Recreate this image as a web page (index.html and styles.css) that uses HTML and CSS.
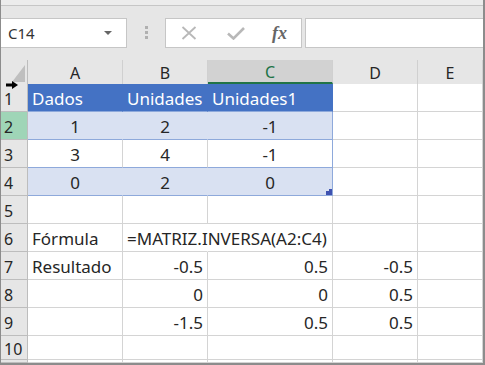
FILE: index.html
```html
<!DOCTYPE html>
<html lang="es">
<head>
  <meta charset="UTF-8" />
  <title>MATRIZ.INVERSA</title>
  <link rel="stylesheet" href="styles.css">
</head>
<body>
  <div class="window">
    <div class="topstrip"></div>
    <div class="toolbar">
      <div class="namebox">
        <span>C14</span>
        <svg class="caret" width="8" height="4" viewBox="0 0 8 4"><path d="M0 0H8L4 4Z" fill="#666"/></svg>
      </div>
      <div class="grip"><i></i><i></i><i></i></div>
      <div class="fxbox">
        <svg width="16" height="14" viewBox="0 0 16 14"><path d="M1.5 1L14.5 13M14.5 1L1.5 13" stroke="#b8b8b8" stroke-width="1.8"/></svg>
        <svg width="18" height="13" viewBox="0 0 18 13"><path d="M1 6.5L6.5 11.5L17 1" stroke="#b8b8b8" stroke-width="2.6" fill="none"/></svg>
        <span class="fx">fx</span>
      </div>
      <div class="formula"></div>
    </div>

    <div class="sheet">
      <div class="hd corner"><span class="tri"></span></div>
      <div class="hd col">A</div>
      <div class="hd col">B</div>
      <div class="hd col active">C</div>
      <div class="hd col">D</div>
      <div class="hd col">E</div>

      <div class="hd row">1</div>
      <div class="c thead">Dados</div>
      <div class="c thead">Unidades</div>
      <div class="c thead tend">Unidades1</div>
      <div class="c"></div>
      <div class="c"></div>

      <div class="hd row on">2</div>
      <div class="c band mid">1</div>
      <div class="c band mid">2</div>
      <div class="c band mid tend">-1</div>
      <div class="c"></div>
      <div class="c"></div>

      <div class="hd row">3</div>
      <div class="c plain mid">3</div>
      <div class="c plain mid">4</div>
      <div class="c plain mid tend">-1</div>
      <div class="c"></div>
      <div class="c"></div>

      <div class="hd row">4</div>
      <div class="c band mid">0</div>
      <div class="c band mid">2</div>
      <div class="c band mid tend">0<span class="handle"></span></div>
      <div class="c"></div>
      <div class="c"></div>

      <div class="hd row">5</div>
      <div class="c"></div>
      <div class="c"></div>
      <div class="c"></div>
      <div class="c"></div>
      <div class="c"></div>

      <div class="hd row">6</div>
      <div class="c">Fórmula</div>
      <div class="c spill">=MATRIZ.INVERSA(A2:C4)</div>
      <div class="c"></div>
      <div class="c"></div>
      <div class="c"></div>

      <div class="hd row">7</div>
      <div class="c">Resultado</div>
      <div class="c num">-0.5</div>
      <div class="c num">0.5</div>
      <div class="c num">-0.5</div>
      <div class="c"></div>

      <div class="hd row">8</div>
      <div class="c"></div>
      <div class="c num">0</div>
      <div class="c num">0</div>
      <div class="c num">0.5</div>
      <div class="c"></div>

      <div class="hd row">9</div>
      <div class="c"></div>
      <div class="c num">-1.5</div>
      <div class="c num">0.5</div>
      <div class="c num">0.5</div>
      <div class="c"></div>

      <div class="hd row">10</div>
      <div class="c"></div>
      <div class="c"></div>
      <div class="c"></div>
      <div class="c"></div>
      <div class="c"></div>

      <div class="hd row"></div>
      <div class="c"></div>
      <div class="c"></div>
      <div class="c"></div>
      <div class="c"></div>
      <div class="c"></div>

      <svg class="arrow" width="12" height="8" viewBox="0 0 12 8"><path d="M0 2.5H6V0L12 4L6 8V5.5H0Z" fill="#000"/></svg>
    </div>
  </div>
</body>
</html>
```

FILE: styles.css
```css
/* Excel-like sheet window */
body, html {
  margin: 0; padding: 0;
  background: #fff;
}
.window {
  width: 485px;
  height: 365px;
  box-sizing: border-box;
  border-left: 1px solid #8c8c8c;
  border-right: 2px solid #8c8c8c;
  border-bottom: 2px solid #8c8c8c;
  background: #e6e6e6;
  font-family: 'Noto Sans', 'Open Sans', sans-serif;
  color: #262626;
  display: flex;
  flex-direction: column;
  overflow: hidden;
}
.topstrip {
  height: 5px;
  background: #ececec;
  border-bottom: 1px solid #c6c6c6;
}
.toolbar {
  height: 54px;
  box-sizing: border-box;
  padding-top: 12px;
  display: flex;
  align-items: flex-start;
}
.namebox, .fxbox, .formula {
  height: 30px;
  box-sizing: border-box;
  background: #fff;
  border: 1px solid #c6c6c6;
  display: flex;
  align-items: center;
}
.namebox {
  width: 126px;
  border-left: none;
  padding: 0 14px 0 7px;
  justify-content: space-between;
  font-size: 15px;
  color: #333;
}
.grip {
  width: 38px;
  display: flex;
  flex-direction: column;
  align-items: center;
  gap: 2px;
  padding-top: 8px;
}
.grip i {
  display: block;
  width: 3px;
  height: 3px;
  background: #b0b0b0;
}
.fxbox {
  width: 137px;
  padding-left: 15px;
  gap: 30px;
}
.fx {
  font-family: 'Liberation Serif', serif;
  font-style: italic;
  font-weight: bold;
  font-size: 18px;
  color: #666;
  margin-left: -3px;
}
.formula {
  margin-left: 3px;
  flex-grow: 1;
  border-right: none;
}

.sheet {
  position: relative;
  flex-grow: 1;
  display: grid;
  grid-template-columns: 27px 95px 85px 125px 85px 65px;
  grid-template-rows: 24px repeat(9, 28px) 24px 3px;
  background: #fff;
  font-size: 17px;
}
.hd {
  background: #e6e6e6;
  border-right: 1px solid #bdbdbd;
  border-bottom: 1px solid #bdbdbd;
  display: flex;
  align-items: center;
  color: #262626;
  font-size: 16px;
}
.col {
  justify-content: center;
  padding-top: 2px;
  border-bottom: none;
  border-right-color: #d0d0d0;
}
.col.active {
  background: #d2d2d2;
  color: #217346;
  border-bottom: 2px solid #217346;
}
.corner {
  position: relative;
  border-bottom: none;
}
.tri {
  position: absolute;
  right: 2px;
  bottom: 2px;
  width: 0; height: 0;
  border-left: 13px solid transparent;
  border-bottom: 17px solid #bfbfbf;
}
.row {
  padding-left: 3px;
  padding-top: 2px;
}
.row.on {
  background: #9fd5b7;
}
.c {
  border-right: 1px solid #d4d4d4;
  border-bottom: 1px solid #d4d4d4;
  display: flex;
  align-items: center;
  padding: 2px 4px 0;
  white-space: nowrap;
  min-width: 0;
}
.thead {
  background: #4472c4;
  color: #fff;
  border-right-color: #4472c4;
  border-bottom-color: #8ea9db;
}
.band {
  background: #d9e1f2;
  border-right-color: #d9e1f2;
  border-bottom-color: #8ea9db;
}
.plain {
  border-bottom-color: #8ea9db;
}
.tend {
  position: relative;
  border-right-color: #8ea9db;
}
.thead.tend {
  border-right-color: #4472c4;
}
.mid {
  justify-content: center;
}
.num {
  justify-content: flex-end;
}
.spill {
  border-right-color: #fff;
  position: relative;
  z-index: 1;
}
.handle {
  position: absolute;
  right: 0;
  bottom: 0;
  width: 6px;
  height: 4px;
  background: #3f52b0;
}
.handle::before {
  content: '';
  position: absolute;
  right: 0;
  bottom: 4px;
  width: 3px;
  height: 2px;
  background: #3f52b0;
}
.arrow {
  position: absolute;
  left: 5px;
  top: 21px;
}
```
